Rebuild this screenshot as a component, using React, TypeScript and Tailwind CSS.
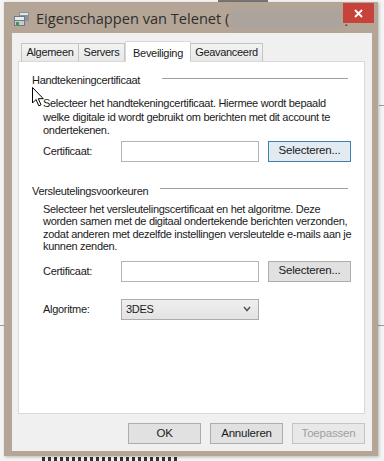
import React from "react";

const font = { fontFamily: '"Liberation Sans", Arial, sans-serif' };
const txt = "text-[11px] tracking-[-0.3px] text-[#1a1a1a]";

const TABS = [
  { title: "Algemeen", w: "w-[58px]" },
  { title: "Servers", w: "w-[47px]" },
  { title: "Beveiliging", w: "w-[66px]", active: true },
  { title: "Geavanceerd", w: "w-[73px]" },
];

const WinButton = ({ label, focused, disabled, className = "" }: { label: string; focused?: boolean; disabled?: boolean; className?: string }) => (
  <div
    className={`h-[21px] flex items-center justify-center text-[11.5px] tracking-[-0.2px] border ${
      focused ? "border-[#3c7fb1] bg-[#e3ebf2]" : "border-[#adadad] bg-[#e1e1e1]"
    } ${disabled ? "text-[#a0a0a0] border-[#c4c4c4] bg-[#e8e8e8]" : "text-[#1a1a1a]"} ${className}`}
  >
    {label}
  </div>
);

const GroupHeading = ({ title, lineStart }: { title: string; lineStart: string }) => (
  <div className="flex items-center h-[15px]">
    <span className={`${txt} leading-[15px] whitespace-nowrap`}>{title}</span>
    <div className={`h-px bg-[#a0a0a0] ${lineStart} flex-1 mr-[16px] -mt-[5px]`} />
  </div>
);

const CertRow = ({ focused }: { focused?: boolean }) => (
  <div className="flex items-center h-[21px]">
    <span className={`w-[78px] ${txt}`}>Certificaat:</span>
    <div className="w-[138px] h-[21px] bg-white border border-[#b4b4b4]" />
    <WinButton label="Selecteren..." focused={focused} className="ml-[9px] w-[83px]" />
  </div>
);

const WindowIcon = () => (
  <svg width="16" height="15" viewBox="0 0 16 15">
    <rect x="5" y="0" width="10" height="9" fill="#8a9399" />
    <rect x="6" y="1" width="8" height="2" fill="#dfe4e8" />
    <rect x="0" y="4" width="11" height="10" fill="#6f7a82" />
    <rect x="1" y="5" width="9" height="3" fill="#e8ecef" />
    <rect x="1" y="9" width="9" height="4" fill="#c4ccd2" />
    <rect x="2" y="10" width="3" height="3" fill="#3a9a4a" />
  </svg>
);

const Cursor = () => (
  <svg width="13" height="20" viewBox="0 0 13 20" className="absolute left-[13px] top-[25px]">
    <path d="M0.5 0.5 L0.5 16 L4 12.5 L6.8 18.8 L9 17.8 L6.3 11.7 L11.3 11.7 Z" fill="#fff" stroke="#000" strokeWidth="1" strokeLinejoin="miter" />
  </svg>
);

const PARA1 = [
  "Selecteer het handtekeningcertificaat. Hiermee wordt bepaald",
  "welke digitale id wordt gebruikt om berichten met dit account te",
  "ondertekenen.",
];

const PARA2 = [
  "Selecteer het versleutelingscertificaat en het algoritme. Deze",
  "worden samen met de digitaal ondertekende berichten verzonden,",
  "zodat anderen met dezelfde instellingen versleutelde e-mails aan je",
  "kunnen zenden.",
];

export default function App() {
  return (
    <div className="w-[384px] h-[461px] bg-[#f4f4f4] overflow-hidden relative" style={font}>
      {/* stuff behind the window */}
      <div className="absolute left-[218px] top-0 w-[50px] h-[2px] bg-[#777]" />
      <div className="absolute right-0 top-[105px] w-[5px] h-px bg-[#9a9a9a]" />
      <div className="absolute right-0 top-[325px] w-[6px] h-px bg-[#9a9a9a]" />
      <div className="absolute left-0 top-[325px] w-[4px] h-px bg-[#9a9a9a]" />
      <div className="absolute left-[42px] top-[457px] w-[135px] h-[4px] bg-[repeating-linear-gradient(90deg,#333_0_3px,transparent_3px_6px)]" />

      {/* window */}
      <div className="relative ml-[4px] mt-[2px] w-[374px] h-[454px] bg-[#b4a596] pl-[8px] pr-[6px] pb-[6px] flex flex-col shadow-[1px_1px_3px_rgba(0,0,0,0.25)]">
        {/* title bar */}
        <div className="h-[31px] flex items-center shrink-0 relative">
          <div className="ml-[2px] mt-[3px]">
            <WindowIcon />
          </div>
          <span className="ml-[6px] mt-[3px] text-[14.6px] text-[#2e2e2e] whitespace-nowrap" style={{ fontFamily: '"Open Sans", "Liberation Sans", sans-serif' }}>
            Eigenschappen van Telenet (
          </span>
          <div className="w-[110px] h-[18px] mt-[3px] ml-[2px] bg-[#aaa49d] blur-[2px]" />
          <span className="text-[#333] text-[14px] mt-[8px] ml-[3px]">.</span>
          <div className="absolute right-[-2px] top-[1px] w-[31px] h-[20px] bg-[#c8423c] flex items-center justify-center">
            <svg width="9" height="9" viewBox="0 0 9 9">
              <path d="M1 1 L8 8 M8 1 L1 8" stroke="#fff" strokeWidth="1.8" />
            </svg>
          </div>
        </div>

        {/* client area */}
        <div className="flex-1 bg-[#f0f0f0] pt-[8px] pl-[6px] pr-[7px] pb-[7px] flex flex-col">
          {/* tab strip */}
          <div className="flex items-end pl-[3px] h-[20px] relative z-10">
            {TABS.map(({ title, w, active }) =>
              active ? (
                <div
                  key={title}
                  className={`${w} h-[21px] -mb-[1px] bg-white border border-b-0 border-[#d9d9d9] ${txt} flex items-start justify-center pt-[3px]`}
                >
                  {title}
                </div>
              ) : (
                <div
                  key={title}
                  className={`${w} h-[18px] -ml-px first:ml-0 bg-gradient-to-b from-[#f3f3f3] to-[#e8e8e8] border border-b-0 border-[#c4c4c4] ${txt} flex items-center justify-center`}
                >
                  {title}
                </div>
              )
            )}
          </div>

          {/* tab panel */}
          <div className="relative h-[353px] bg-white border border-[#d9d9d9] pl-[13px] pt-[11px]">
            <Cursor />
            <GroupHeading title="Handtekeningcertificaat" lineStart="ml-[22px]" />
            <div className={`mt-[9px] ml-[11px] ${txt} leading-[13.5px] whitespace-nowrap`}>
              {PARA1.map((l) => (
                <div key={l}>{l}</div>
              ))}
            </div>
            <div className="mt-[3px] ml-[11px]">
              <CertRow focused />
            </div>

            <div className="mt-[22px]">
              <GroupHeading title="Versleutelingsvoorkeuren" lineStart="ml-[12px]" />
            </div>
            <div className={`mt-[4px] ml-[11px] ${txt} leading-[12.5px] whitespace-nowrap`}>
              {PARA2.map((l) => (
                <div key={l}>{l}</div>
              ))}
            </div>
            <div className="mt-[8px] ml-[11px]">
              <CertRow />
            </div>
            <div className="mt-[17px] ml-[11px] flex items-center h-[21px]">
              <span className={`w-[78px] ${txt}`}>Algoritme:</span>
              <div className={`w-[138px] h-[21px] bg-gradient-to-b from-[#efefef] to-[#e3e3e3] border border-[#acacac] flex items-center pl-[4px] pr-[7px] ${txt}`}>
                <span className="flex-1">3DES</span>
                <svg width="8" height="6" viewBox="0 0 8 6">
                  <path d="M1 1 L4 4.5 L7 1" stroke="#555" strokeWidth="1.5" fill="none" />
                </svg>
              </div>
            </div>
          </div>

          {/* dialog buttons */}
          <div className="flex justify-end gap-[9px] mt-[9px]">
            <WinButton label="OK" className="w-[73px]" />
            <WinButton label="Annuleren" className="w-[73px]" />
            <WinButton label="Toepassen" disabled className="w-[73px]" />
          </div>
        </div>
      </div>
    </div>
  );
}
